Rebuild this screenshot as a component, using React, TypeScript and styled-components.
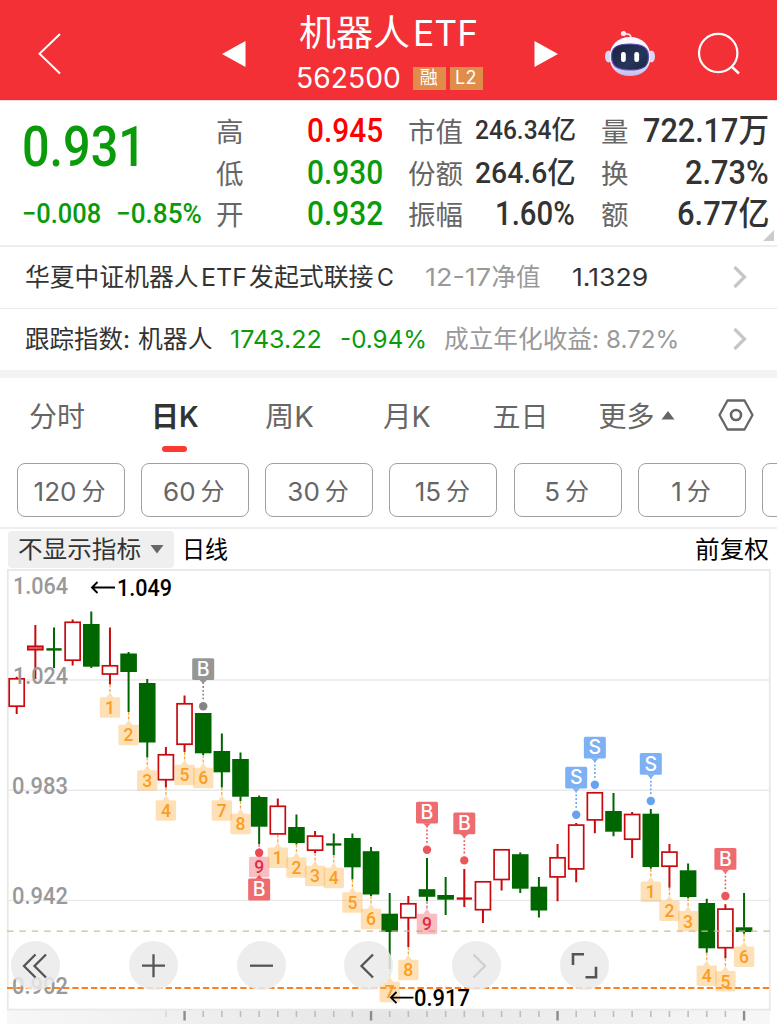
import React, { useLayoutEffect, useRef } from 'react';
import styled, { createGlobalStyle } from 'styled-components';

const CJK = '"Noto Sans CJK SC"';
const TEXT = `Inter, ${CJK}, sans-serif`;
const DIGITS = `Roboto, ${CJK}, sans-serif`;

const GlobalStyle = createGlobalStyle`
  * { box-sizing: border-box; }
  body { margin: 0; background: #fff; overflow: hidden; }
`;

/* Text squeezed or stretched to a fixed column width. */
const FitBox = styled.span<{ $w: number; $ml?: number }>`
  display: block;
  flex: none;
  width: ${p => p.$w}px;
  margin-left: ${p => p.$ml ?? 0}px;
  white-space: nowrap;
`;
const FitInner = styled.span`
  display: inline-block;
  transform-origin: 0 50%;
  white-space: pre;
`;
function Fit({ w, ml, children }: { w: number; ml?: number; children: React.ReactNode }) {
  const ref = useRef<HTMLSpanElement>(null);
  useLayoutEffect(() => {
    const el = ref.current;
    if (el) el.style.transform = `scaleX(${w / el.offsetWidth})`;
  }, [w]);
  return (
    <FitBox $w={w} $ml={ml}>
      <FitInner ref={ref}>{children}</FitInner>
    </FitBox>
  );
}

const Screen = styled.main`
  width: 777px;
  height: 1024px;
  overflow: hidden;
  background: #fff;
  display: flex;
  flex-direction: column;
  font-family: ${TEXT};
  color: #333;
`;

/* ---------- header ---------- */
const Header = styled.header`
  height: 100px;
  flex: none;
  background: #f23036;
  color: #fff;
  display: flex;
  align-items: center;
  padding: 7px 35px 0 36px;
`;
const HeaderIcon = styled.svg<{ $ml?: number }>`
  flex: none;
  display: block;
  margin-left: ${p => p.$ml ?? 0}px;
`;
const TitleBlock = styled.div`
  width: 190px;
  margin: -7px 0 0 50px;
  height: 100px;
  display: flex;
  flex-direction: column;
`;
const Title = styled.div`
  display: flex;
  height: 44px;
  margin-top: 11px;
  padding-left: 3px;
  font-size: 36px;
  line-height: 44px;
`;
const Code = styled.div`
  display: flex;
  align-items: center;
  height: 34px;
  margin-top: 6px;
  font-size: 28px;
  line-height: 34px;
`;
const Badge = styled.span<{ $ml: number }>`
  margin-left: ${p => p.$ml}px;
  width: 33px;
  height: 23px;
  flex: none;
  background: #e08c4a;
  font-size: 18px;
  line-height: 22px;
  text-align: center;
  letter-spacing: 0.5px;
`;

/* ---------- quote ---------- */
const Quote = styled.section`
  position: relative;
  flex: none;
  height: 147px;
  padding: 10px 0 0 22px;
  border-top: 1px solid #f3d9d9;
  border-bottom: 2px solid #eee;
  display: grid;
  grid-template-columns: 194px 91px 101px 67px 126px 41px 127px;
`;
const Column = styled.div<{ $end?: boolean }>`
  display: flex;
  flex-direction: column;
  align-items: ${p => (p.$end ? 'flex-end' : 'flex-start')};
`;
const Label = styled.div`
  height: 41.5px;
  line-height: 43px;
  font-size: 27.5px;
  color: #666;
  font-family: ${TEXT};
`;
const Value = styled.div<{ $c?: string; $size?: number }>`
  height: 41.5px;
  line-height: 40px;
  font: 500 ${p => p.$size ?? 33}px/39px ${DIGITS};
  color: ${p => p.$c ?? '#333'};
`;
const Price = styled.div`
  height: 83px;
  font: 500 56px/72px ${DIGITS};
  color: #0a9a0a;
`;
const Change = styled.div`
  display: flex;
  font: 500 28px/40px ${DIGITS};
  color: #0a9a0a;
`;
const Corner = styled.span`
  position: absolute;
  right: 3px;
  bottom: 4px;
  border-left: 11px solid transparent;
  border-bottom: 11px solid #ccc;
`;

/* ---------- info rows ---------- */
const InfoRow = styled.section<{ $last?: boolean }>`
  flex: none;
  height: ${p => (p.$last ? 69 : 62)}px;
  border-bottom: ${p => (p.$last ? '8px solid #f3f3f3' : '1px solid #e9e9e9')};
  padding: 0 0 2px 25px;
  display: flex;
  align-items: center;
  font-size: 24.5px;
  line-height: 36px;
`;
const Tone = styled.span<{ $c: string }>`
  color: ${p => p.$c};
`;
const RowArrow = styled.svg`
  margin-left: auto;
  margin-right: 30px;
`;

/* ---------- tabs ---------- */
const Tabs = styled.nav`
  flex: none;
  height: 85px;
  display: grid;
  grid-template-columns: 29px 122px 114px 117.5px 110px 106px 119px 1fr;
  color: #666;
  font-size: 28px;
`;
const Tab = styled.div<{ $active?: boolean }>`
  line-height: 40px;
  padding-top: 19px;
  height: 85px;
  display: flex;
  color: ${p => (p.$active ? '#333' : 'inherit')};
  font-weight: ${p => (p.$active ? 600 : 400)};
`;
const ActiveTab = styled.div`
  display: flex;
  flex-direction: column;
`;
const Underline = styled.span`
  width: 25px;
  height: 6px;
  border-radius: 3px;
  background: #fc3a30;
  margin: -17px 0 0 11px;
  flex: none;
`;
const TabMark = styled.svg<{ $mt: number; $ml: number }>`
  margin: ${p => p.$mt}px 0 0 ${p => p.$ml}px;
`;

/* ---------- periods ---------- */
const Periods = styled.div`
  flex: none;
  height: 66px;
  border-bottom: 2px solid #eee;
  padding-left: 16.5px;
  display: flex;
  gap: 16.3px;
  overflow: hidden;
`;
const Period = styled.button`
  flex: none;
  width: 108px;
  height: 54px;
  padding: 2px 2px 0 0;
  border: 1px solid #a0a0a0;
  border-radius: 8px;
  background: #fff;
  color: #666;
  font: 400 26px/51px ${TEXT};
  display: flex;
  justify-content: center;
  gap: 5px;
`;
const Unit = styled.span`
  font-size: 24px;
`;

/* ---------- chart ---------- */
const ChartBar = styled.div`
  flex: none;
  height: 40px;
  display: flex;
  align-items: flex-start;
  padding: 2px 8px 0 8px;
  color: #000;
  font-size: 24px;
  line-height: 37px;
`;
const Indicator = styled.div`
  width: 166px;
  height: 37px;
  border-radius: 4px;
  background: #efefef;
  color: #333;
  padding-left: 10px;
  display: flex;
  margin-right: 8px;
`;
const Grow = styled.span`
  flex: 1;
`;
const ChartArea = styled.section`
  position: relative;
  flex: none;
  height: 455px;
`;
const ChartSvg = styled.svg`
  display: block;
`;
const Controls = styled.div`
  position: absolute;
  left: 11px;
  top: 371.5px;
  display: flex;
  gap: 58.8px;
`;
const Control = styled.button<{ $first?: boolean }>`
  width: 49px;
  height: 49px;
  padding: 0;
  border: 0;
  border-radius: 50%;
  background: rgba(234, 234, 234, 0.86);
  margin-right: ${p => (p.$first ? 10 : 0)}px;
`;
const ControlIcon = styled.svg`
  display: block;
`;

type Candle = [up: 0 | 1, high: number, top: number, bottom: number, low: number];
const candles: Candle[] = [
  [1, 676.7, 678, 707, 714],
  [1, 625, 645.5, 650.5, 679],
  [0, 627.5, 648.2, 650.6, 668],
  [1, 619.5, 621.5, 661, 665.5],
  [0, 611.5, 624, 666.7, 668],
  [1, 627.5, 665, 674.8, 684.5],
  [0, 652, 653.5, 672, 712],
  [0, 679, 683, 742.5, 757.5],
  [1, 747, 754, 780.5, 787.5],
  [1, 695.5, 703, 745, 752],
  [0, 713, 713, 753.3, 755],
  [0, 733.5, 751, 772.3, 787.5],
  [0, 752.5, 759, 796.7, 801],
  [0, 795.5, 797, 826.7, 844],
  [1, 798.5, 805.5, 834.7, 834.7],
  [0, 814.5, 827, 843, 844.5],
  [1, 831, 835.3, 851, 853],
  [0, 833.5, 843.3, 845.6, 855],
  [0, 833.5, 838, 867.3, 879.5],
  [0, 847, 851.2, 894.5, 896],
  [0, 893, 913.7, 932, 969],
  [1, 896, 903, 918.5, 947],
  [0, 858, 889.2, 896.8, 901],
  [0, 877, 895, 899.7, 915],
  [1, 869, 897.4, 899.7, 907],
  [1, 881, 881, 910.5, 923],
  [1, 849, 849, 880.3, 890.5],
  [0, 852.5, 854.2, 888.7, 893],
  [0, 877, 886.7, 910.5, 917.5],
  [1, 844, 857, 877.7, 901.3],
  [1, 823, 824.3, 869.7, 882.3],
  [1, 792, 792, 820.7, 833.3],
  [0, 793, 811, 831.7, 836.3],
  [1, 812, 813.7, 840, 858],
  [0, 809, 813.7, 867, 868.7],
  [1, 844, 851.3, 867, 887.7],
  [0, 863.5, 870.3, 897, 898.3],
  [0, 898.7, 903, 948.3, 952.7],
  [1, 904.3, 908.3, 948.5, 958.3],
  [0, 893, 927.3, 932, 933.7],
];
const xOf = (i: number) => 16.7 + 18.65 * i;

const tags: [number, number][] = [
  ...Array.from({ length: 9 }, (_, k): [number, number] => [5 + k, k + 1]),
  ...Array.from({ length: 9 }, (_, k): [number, number] => [14 + k, k + 1]),
  ...Array.from({ length: 6 }, (_, k): [number, number] => [34 + k, k + 1]),
];

const signals: [number, string, number, string, string][] = [
  [10, 'B', 706.3, '#969696', '#858585'],
  [22, 'B', 849.8, '#ee6c70', '#eb565a'],
  [24, 'B', 860.4, '#ee6c70', '#eb565a'],
  [30, 'S', 814.7, '#7db1f4', '#65a2ef'],
  [31, 'S', 784.7, '#7db1f4', '#65a2ef'],
  [34, 'S', 801, '#7db1f4', '#65a2ef'],
  [38, 'B', 896, '#ee6c70', '#eb565a'],
];

const axis: [string, number, number][] = [
  ['1.064', 13, 594.3],
  ['1.024', 13, 683.5],
  ['0.983', 12, 793.8],
  ['0.942', 12, 904],
  ['0.902', 12, 993.5],
];

function CandleMark({ i, c }: { i: number; c: Candle }) {
  const [up, high, top, bottom, low] = c;
  const x = xOf(i);
  const color = up ? '#c80a0f' : '#006600';
  const h = bottom - top;
  const thin = h < 3;
  return (
    <g>
      <path d={`M${x} ${high}V${top + 0.5}M${x} ${bottom - 0.5}V${low}`} stroke={color} strokeWidth={2} />
      {thin && <rect x={x - 7.6} y={top} width={15.2} height={h} fill={color} />}
      {!thin && !up && <rect x={x - 8.3} y={top} width={16.6} height={h} fill={color} />}
      {!thin && !!up && (
        <rect x={x - 7.5} y={top + 0.8} width={15} height={h - 1.6} fill={h < 6 ? '#d8686b' : '#fff'} stroke={color} strokeWidth={1.7} />
      )}
    </g>
  );
}

function CountTag({ i, n }: { i: number; n: number }) {
  const x = xOf(i);
  const low = candles[i][4];
  const nine = n === 9;
  const y = low + 12.8;
  const fill = nine ? 'rgba(240,110,120,0.45)' : 'rgba(252,180,80,0.42)';
  return (
    <g>
      <path d={`M${x} ${low}V${y - 4}`} stroke={nine ? '#e8606a' : '#f7a93e'} strokeWidth={1.3} strokeDasharray="3 1.6" />
      <path
        d={`M${x - 8.8} ${y}h5.4l3.4 -5l3.4 5h5.4q1.4 0 1.4 1.4v17.6q0 1.4 -1.4 1.4h-17.6q-1.4 0 -1.4 -1.4v-17.6q0 -1.4 1.4 -1.4z`}
        fill={fill}
      />
      <text x={x} y={y + 16.6} textAnchor="middle" fontFamily={DIGITS} fontSize={17.5} fontWeight={500} fill={nine ? '#e22c40' : '#fb9d22'}>
        {n}
      </text>
    </g>
  );
}

function Flag({ x, y, letter, fill }: { x: number; y: number; letter: string; fill: string }) {
  return (
    <g>
      <rect x={x - 11} y={y} width={22} height={21.8} rx={1.5} fill={fill} />
      <text x={x} y={y + 17.6} textAnchor="middle" fontFamily={TEXT} fontSize={19.5} fontWeight={500} fill="#fff">
        {letter}
      </text>
    </g>
  );
}

function Chart() {
  return (
    <ChartSvg width={777} height={455} viewBox="0 569 777 455">
      <defs>
        <linearGradient id="ruler" x1="0" x2="1" y1="0" y2="0">
          <stop offset="0" stopColor="#f7f7f7" />
          <stop offset="0.5" stopColor="#e6e6e6" />
          <stop offset="1" stopColor="#f7f7f7" />
        </linearGradient>
      </defs>
      <rect x={7} y={1010} width={763} height={14} fill="url(#ruler)" />
      {candles.map((_, i) => {
        if (i < 8) return null;
        const major = i % 10 === 9;
        return (
          <rect
            key={i}
            x={xOf(i) - (major ? 1.2 : 0.8)}
            y={1011}
            width={major ? 2.4 : 1.6}
            height={major ? 9.5 : 6}
            fill={major ? '#8c8c8c' : i === 8 ? '#d8d8d8' : '#bdbdbd'}
          />
        );
      })}
      <path d="M8 680H770M8 790.2H770M8 900.4H770" stroke="#e9e9e9" strokeWidth={1.4} />
      <rect x={7.8} y={570} width={762} height={439.6} fill="none" stroke="#e8e8e8" strokeWidth={1.8} />
      {candles.map((c, i) => (
        <CandleMark key={i} i={i} c={c} />
      ))}
      <path d="M7 931.2H770" stroke="#cbbd94" strokeWidth={1.3} strokeDasharray="6.4 6" />
      <path d="M7 988H770" stroke="#ff7f1c" strokeWidth={2} strokeDasharray="6.3 3.03" />
      {tags.map(([i, n]) => (
        <CountTag key={i} i={i} n={n} />
      ))}
      {signals.map(([i, letter, y, fill, dot]) => (
        <g key={i}>
          <circle cx={xOf(i)} cy={y} r={4.2} fill={dot} />
          <path d={`M${xOf(i)} ${y - 24}V${y - 6}`} stroke={dot} strokeWidth={1.6} strokeDasharray="1.8 2" />
          <path d={`M${xOf(i) - 4} ${y - 26.5}h8l-4 4z`} fill={fill} />
          <Flag x={xOf(i)} y={y - 48} letter={letter} fill={fill} />
        </g>
      ))}
      <circle cx={xOf(13)} cy={852.7} r={4.2} fill="#eb4a55" />
      <path d={`M${xOf(13) - 4} 879.5l4 -4.5l4 4.5z`} fill="#eb5058" />
      <Flag x={xOf(13)} y={878.6} letter="B" fill="#ee6c70" />
      <g fontFamily={DIGITS} fontSize={24} fontWeight={500} fill="#999">
        {axis.map(([t, x, y]) => (
          <text key={t} x={x} y={y} textLength={68 - x} lengthAdjust="spacingAndGlyphs">
            {t}
          </text>
        ))}
        <text x={117} y={596.2} fill="#000" textLength={55} lengthAdjust="spacingAndGlyphs">1.049</text>
        <text x={414} y={1006.2} fill="#000" textLength={56} lengthAdjust="spacingAndGlyphs">0.917</text>
      </g>
      <path d="M115 587.5H92M97.5 582L92 587.5L97.5 593M413.5 997.6H391M396.5 992L391 997.6L396.5 1003.1" fill="none" stroke="#000" strokeWidth={1.9} />
    </ChartSvg>
  );
}

const controlIcons: { d: string; color?: string; w?: number }[] = [
  { d: 'M24.5 13.5L13 25L24.5 36.5M35 13.5L23.5 25L35 36.5' },
  { d: 'M13 24.7H36M24.5 13.2V36.2' },
  { d: 'M13 24.7H36' },
  { d: 'M29 13.5L17.5 25L29 36.5' },
  { d: 'M21.5 13.5L33 25L21.5 36.5', color: '#d0d0d0' },
  { d: 'M13 24V13.3H24M36 25.8V36.3H25.5', w: 2.6 },
];

export default function App() {
  return (
    <Screen>
      <GlobalStyle />
      <Header>
        <HeaderIcon width={28} height={44} viewBox="36 32 28 44">
          <path d="M60 34L39.5 53.8L60 73.5" fill="none" stroke="#fff" strokeWidth={2} />
        </HeaderIcon>
        <HeaderIcon width={24} height={28} viewBox="222.5 39 24 28" $ml={158}>
          <path d="M222.5 53L246 40V66Z" fill="#fff" />
        </HeaderIcon>
        <TitleBlock>
          <Title>
            <Fit w={111}>机器人</Fit>
            <Fit w={65} ml={3}>ETF</Fit>
          </Title>
          <Code>
            <Fit w={105}>562500</Fit>
            <Badge $ml={11.5}>融</Badge>
            <Badge $ml={4}>L2</Badge>
          </Code>
        </TitleBlock>
        <HeaderIcon width={24} height={28} viewBox="535.5 39 24 28" $ml={49}>
          <path d="M559.5 53L536 40V66Z" fill="#fff" />
        </HeaderIcon>
        <HeaderIcon width={54} height={52} viewBox="603 27 54 52" $ml={45}>
          <defs>
            <linearGradient id="shell" x1="0" x2="0" y1="0" y2="1">
              <stop offset="0" stopColor="#fdfcff" />
              <stop offset="0.7" stopColor="#e9e6fb" />
              <stop offset="1" stopColor="#bdbbee" />
            </linearGradient>
            <linearGradient id="visor" x1="0" x2="1" y1="0" y2="1">
              <stop offset="0" stopColor="#17223f" />
              <stop offset="0.6" stopColor="#27355a" />
              <stop offset="1" stopColor="#182442" />
            </linearGradient>
            <linearGradient id="glow" x1="0" x2="1" y1="1" y2="0">
              <stop offset="0" stopColor="#a05be8" />
              <stop offset="0.5" stopColor="#3b3f8f" />
              <stop offset="1" stopColor="#7d55f0" />
            </linearGradient>
          </defs>
          <path d="M631 37C631 33 628 32.5 624 33" fill="none" stroke="#efdcec" strokeWidth={1.8} />
          <circle cx={623.5} cy={32.5} r={2.6} fill="#f8eef8" />
          <ellipse cx={608.5} cy={55.5} rx={3.5} ry={6} fill="#d9d6f4" />
          <ellipse cx={651.5} cy={55.5} rx={3.5} ry={6} fill="#d9d6f4" />
          <path d="M630 36C642 36 650.5 44 650.5 56C650.5 68 642 75 630 75S609.5 68 609.5 56C609.5 44 618 36 630 36Z" fill="url(#shell)" />
          <path d="M630 43C643 43 648.5 46.5 648.5 55.5C648.5 65.5 643 69 630 69S611.5 65.5 611.5 55.5C611.5 46.5 617 43 630 43Z" fill="url(#visor)" stroke="url(#glow)" strokeWidth={1.2} />
          <rect x={621} y={51} width={4.8} height={10} rx={2.2} fill="#fff" />
          <rect x={634.3} y={51} width={4.8} height={10} rx={2.2} fill="#fff" />
        </HeaderIcon>
        <HeaderIcon width={46} height={46} viewBox="696 31 46 46" $ml={39}>
          <circle cx={718.2} cy={53} r={19.2} fill="none" stroke="#fff" strokeWidth={2.2} />
          <path d="M731.5 66.5L739 73.5" stroke="#fff" strokeWidth={2.4} />
        </HeaderIcon>
      </Header>

      <Quote>
        <Column>
          <Price><Fit w={124}>0.931</Fit></Price>
          <Change>
            <Fit w={79}>−0.008</Fit>
            <Fit w={86} ml={15}>−0.85%</Fit>
          </Change>
        </Column>
        <Column>
          <Label>高</Label>
          <Label>低</Label>
          <Label>开</Label>
        </Column>
        <Column>
          <Value $c="#f00"><Fit w={76}>0.945</Fit></Value>
          <Value $c="#0a9a0a"><Fit w={76}>0.930</Fit></Value>
          <Value $c="#0a9a0a"><Fit w={76}>0.932</Fit></Value>
        </Column>
        <Column>
          <Label>市值</Label>
          <Label>份额</Label>
          <Label>振幅</Label>
        </Column>
        <Column>
          <Value $size={26}><Fit w={101}>246.34亿</Fit></Value>
          <Value $size={30}><Fit w={101}>264.6亿</Fit></Value>
          <Value><Fit w={80} ml={20}>1.60%</Fit></Value>
        </Column>
        <Column>
          <Label>量</Label>
          <Label>换</Label>
          <Label>额</Label>
        </Column>
        <Column $end>
          <Value><Fit w={126}>722.17万</Fit></Value>
          <Value><Fit w={84}>2.73%</Fit></Value>
          <Value><Fit w={92}>6.77亿</Fit></Value>
        </Column>
        <Corner />
      </Quote>

      <InfoRow>
        <Fit w={174}>华夏中证机器人</Fit>
        <Fit w={46} ml={1.5}>ETF</Fit>
        <Fit w={125} ml={2}>发起式联接</Fit>
        <Fit w={17} ml={3}>C</Fit>
        <Tone $c="#999"><Fit w={66} ml={31}>12-17</Fit></Tone>
        <Tone $c="#999"><Fit w={49} ml={1}>净值</Fit></Tone>
        <Fit w={76} ml={31}>1.1329</Fit>
        <RowArrow width={14} height={24} viewBox="0 0 14 24">
          <path d="M1.5 2L11.5 12L1.5 22" fill="none" stroke="#c6c6c6" strokeWidth={3.2} />
        </RowArrow>
      </InfoRow>
      <InfoRow $last>
        <Fit w={112}>跟踪指数: </Fit>
        <Fit w={75} ml={1}>机器人</Fit>
        <Tone $c="#0a9a0a"><Fit w={92} ml={17}>1743.22</Fit></Tone>
        <Tone $c="#0a9a0a"><Fit w={87} ml={18}>-0.94%</Fit></Tone>
        <Tone $c="#999"><Fit w={155} ml={17}>成立年化收益:</Fit></Tone>
        <Tone $c="#999"><Fit w={73} ml={7}>8.72%</Fit></Tone>
        <RowArrow width={14} height={24} viewBox="0 0 14 24">
          <path d="M1.5 2L11.5 12L1.5 22" fill="none" stroke="#c6c6c6" strokeWidth={3.2} />
        </RowArrow>
      </InfoRow>

      <Tabs>
        <span />
        <Tab>分时</Tab>
        <ActiveTab>
          <Tab $active><Fit w={48}>日K</Fit></Tab>
          <Underline />
        </ActiveTab>
        <Tab><Fit w={49}>周K</Fit></Tab>
        <Tab><Fit w={48}>月K</Fit></Tab>
        <Tab>五日</Tab>
        <Tab>
          更多
          <TabMark width={14} height={9} $mt={14} $ml={6}>
            <path d="M0.5 8.5L7 0L13.5 8.5Z" fill="#666" />
          </TabMark>
        </Tab>
        <TabMark width={38} height={34} viewBox="0 0 38 34" $mt={20} $ml={-1}>
          <path d="M10.5 2.5H27.5L35.5 17L27.5 31.5H10.5L2.5 17Z" fill="none" stroke="#666" strokeWidth={2.3} strokeLinejoin="round" />
          <circle cx={19} cy={17} r={5} fill="none" stroke="#666" strokeWidth={2.6} />
        </TabMark>
      </Tabs>

      <Periods>
        {['120', '60', '30', '15', '5', '1', ''].map(n => (
          <Period key={n}>
            {n && (
              <>
                <span>{n}</span>
                <Unit>分</Unit>
              </>
            )}
          </Period>
        ))}
      </Periods>

      <ChartBar>
        <Indicator>
          <Fit w={123}>不显示指标</Fit>
          <TabMark width={14} height={9} $mt={14} $ml={8.5}>
            <path d="M0.5 0L7 8.5L13.5 0Z" fill="#666" />
          </TabMark>
        </Indicator>
        <Fit w={46}>日线</Fit>
        <Grow />
        <Fit w={74}>前复权</Fit>
      </ChartBar>

      <ChartArea>
        <Chart />
        <Controls>
          {controlIcons.map((icon, k) => (
            <Control key={k} $first={k === 0}>
              <ControlIcon width={49} height={49}>
                <path d={icon.d} fill="none" stroke={icon.color ?? '#555'} strokeWidth={icon.w ?? 2.3} />
              </ControlIcon>
            </Control>
          ))}
        </Controls>
      </ChartArea>
    </Screen>
  );
}
